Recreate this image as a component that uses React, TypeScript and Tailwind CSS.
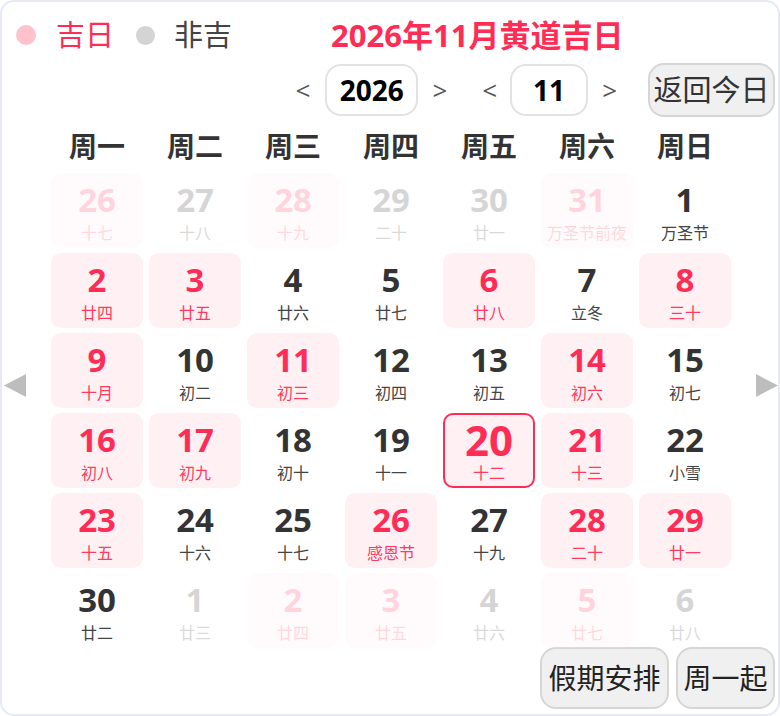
import React from "react";

type Cell = { d: number; l: string; ji: boolean; other?: boolean; today?: boolean };

const rows: Cell[][] = [
  [
    { d: 26, l: "十七", ji: true, other: true },
    { d: 27, l: "十八", ji: false, other: true },
    { d: 28, l: "十九", ji: true, other: true },
    { d: 29, l: "二十", ji: false, other: true },
    { d: 30, l: "廿一", ji: false, other: true },
    { d: 31, l: "万圣节前夜", ji: true, other: true },
    { d: 1, l: "万圣节", ji: false },
  ],
  [
    { d: 2, l: "廿四", ji: true },
    { d: 3, l: "廿五", ji: true },
    { d: 4, l: "廿六", ji: false },
    { d: 5, l: "廿七", ji: false },
    { d: 6, l: "廿八", ji: true },
    { d: 7, l: "立冬", ji: false },
    { d: 8, l: "三十", ji: true },
  ],
  [
    { d: 9, l: "十月", ji: true },
    { d: 10, l: "初二", ji: false },
    { d: 11, l: "初三", ji: true },
    { d: 12, l: "初四", ji: false },
    { d: 13, l: "初五", ji: false },
    { d: 14, l: "初六", ji: true },
    { d: 15, l: "初七", ji: false },
  ],
  [
    { d: 16, l: "初八", ji: true },
    { d: 17, l: "初九", ji: true },
    { d: 18, l: "初十", ji: false },
    { d: 19, l: "十一", ji: false },
    { d: 20, l: "十二", ji: true, today: true },
    { d: 21, l: "十三", ji: true },
    { d: 22, l: "小雪", ji: false },
  ],
  [
    { d: 23, l: "十五", ji: true },
    { d: 24, l: "十六", ji: false },
    { d: 25, l: "十七", ji: false },
    { d: 26, l: "感恩节", ji: true },
    { d: 27, l: "十九", ji: false },
    { d: 28, l: "二十", ji: true },
    { d: 29, l: "廿一", ji: true },
  ],
  [
    { d: 30, l: "廿二", ji: false },
    { d: 1, l: "廿三", ji: false, other: true },
    { d: 2, l: "廿四", ji: true, other: true },
    { d: 3, l: "廿五", ji: true, other: true },
    { d: 4, l: "廿六", ji: false, other: true },
    { d: 5, l: "廿七", ji: true, other: true },
    { d: 6, l: "廿八", ji: false, other: true },
  ],
];

const weekdays = ["周一", "周二", "周三", "周四", "周五", "周六", "周日"];

function DayCell({ c }: { c: Cell }) {
  const base = "h-[75px] rounded-[10px] flex flex-col items-center box-border";
  const bg = c.ji ? "bg-[#fff0f3]" : "";
  const border = c.today ? "border-2 border-[#ff2d55]" : "";
  const op = c.other ? "opacity-20" : "";
  return (
    <div className={`${base} ${bg} ${border} ${op} ${c.today ? "pt-[4px]" : "pt-[7px]"}`}>
      <div
        className={`font-bold ${c.today ? "text-[42px] leading-[38px] h-[38px] mt-[2px]" : "text-[33px] leading-[40px] h-[40px]"} ${
          c.ji ? "text-[#ff2d55]" : "text-[#333333]"
        }`}
      >
        {c.d}
      </div>
      <div
        className={`text-[16px] leading-[20px] whitespace-nowrap ${c.today ? "mt-[4px]" : "mt-[3px]"} ${
          c.ji ? "text-[#ff3a5e]" : "text-[#444444]"
        }`}
      >
        {c.l}
      </div>
    </div>
  );
}

export default function App() {
  return (
    <div
      className="w-[780px] h-[716px] box-border border-2 border-[#e7eaf4] rounded-[14px] bg-white overflow-hidden"
      style={{ fontFamily: '"Open Sans", "Noto Sans CJK SC", sans-serif' }}
    >
      {/* Row 1 */}
      <div className="flex items-center h-[40px] mt-[13px] pl-[14px]">
        <span className="w-[20px] h-[20px] rounded-full bg-[#ffc2cc]" />
        <span className="ml-[20px] text-[29px] leading-[40px] text-[#ff2d55]">吉日</span>
        <span className="ml-[22px] w-[19px] h-[19px] rounded-full bg-[#d4d4d4]" />
        <span className="ml-[19px] text-[29px] leading-[40px] text-[#444444]">非吉</span>
        <span className="ml-[99px] text-[31px] leading-[40px] font-bold text-[#ff2d55]">
          2026年11月黄道吉日
        </span>
      </div>

      {/* Row 2 */}
      <div className="flex items-center justify-end h-[54px] mt-[8px] pr-[3px]">
        <span className="text-[26px] text-[#555555] leading-none">&lt;</span>
        <div className="ml-[15px] w-[93px] h-[52px] rounded-[16px] border-2 border-[#e2e2e2] flex items-center justify-center text-[28px] font-bold text-black">
          2026
        </div>
        <span className="ml-[14px] text-[26px] text-[#555555] leading-none">&gt;</span>
        <span className="ml-[35px] text-[26px] text-[#555555] leading-none">&lt;</span>
        <div className="ml-[13px] w-[78px] h-[52px] rounded-[16px] border-2 border-[#e2e2e2] flex items-center justify-center text-[28px] font-bold text-black">
          11
        </div>
        <span className="ml-[14px] text-[26px] text-[#555555] leading-none">&gt;</span>
        <button className="ml-[31px] w-[127px] h-[54px] rounded-[16px] border-2 border-[#d6d6d6] bg-[#f0f0f0] text-[29px] text-[#333333] flex items-center justify-center whitespace-nowrap">
          返回今日
        </button>
      </div>

      {/* Weekdays */}
      <div className="flex mt-[8px]">
        <div className="w-[49px]" />
        <div className="grid grid-cols-7 gap-x-[6px] w-[680px]">
          {weekdays.map((w) => (
            <div key={w} className="h-[42px] flex items-center justify-center text-[28px] font-bold text-[#333333]">
              {w}
            </div>
          ))}
        </div>
      </div>

      {/* Grid */}
      <div className="flex mt-[6px]">
        <div className="w-[49px] flex justify-start pl-[2px] pt-[201px]">
          <svg width="22" height="23" viewBox="0 0 22 23">
            <polygon points="22,0 22,23 0,11.5" fill="#bdbdbd" />
          </svg>
        </div>
        <div className="grid grid-cols-7 gap-x-[6px] gap-y-[5px] w-[680px]">
          {rows.flat().map((c, i) => (
            <DayCell key={i} c={c} />
          ))}
        </div>
        <div className="flex-1 flex justify-end pt-[201px]">
          <svg width="22" height="23" viewBox="0 0 22 23">
            <polygon points="0,0 0,23 22,11.5" fill="#bdbdbd" />
          </svg>
        </div>
      </div>

      {/* Bottom buttons */}
      <div className="flex justify-end gap-[7px] pr-[3px] mt-[-1px]">
        <button className="w-[129px] h-[62px] rounded-[16px] border-2 border-[#d6d6d6] bg-[#f0f0f0] text-[28px] text-[#222222] flex items-center justify-center whitespace-nowrap">
          假期安排
        </button>
        <button className="w-[99px] h-[62px] rounded-[16px] border-2 border-[#d6d6d6] bg-[#f0f0f0] text-[28px] text-[#222222] flex items-center justify-center whitespace-nowrap">
          周一起
        </button>
      </div>
    </div>
  );
}
